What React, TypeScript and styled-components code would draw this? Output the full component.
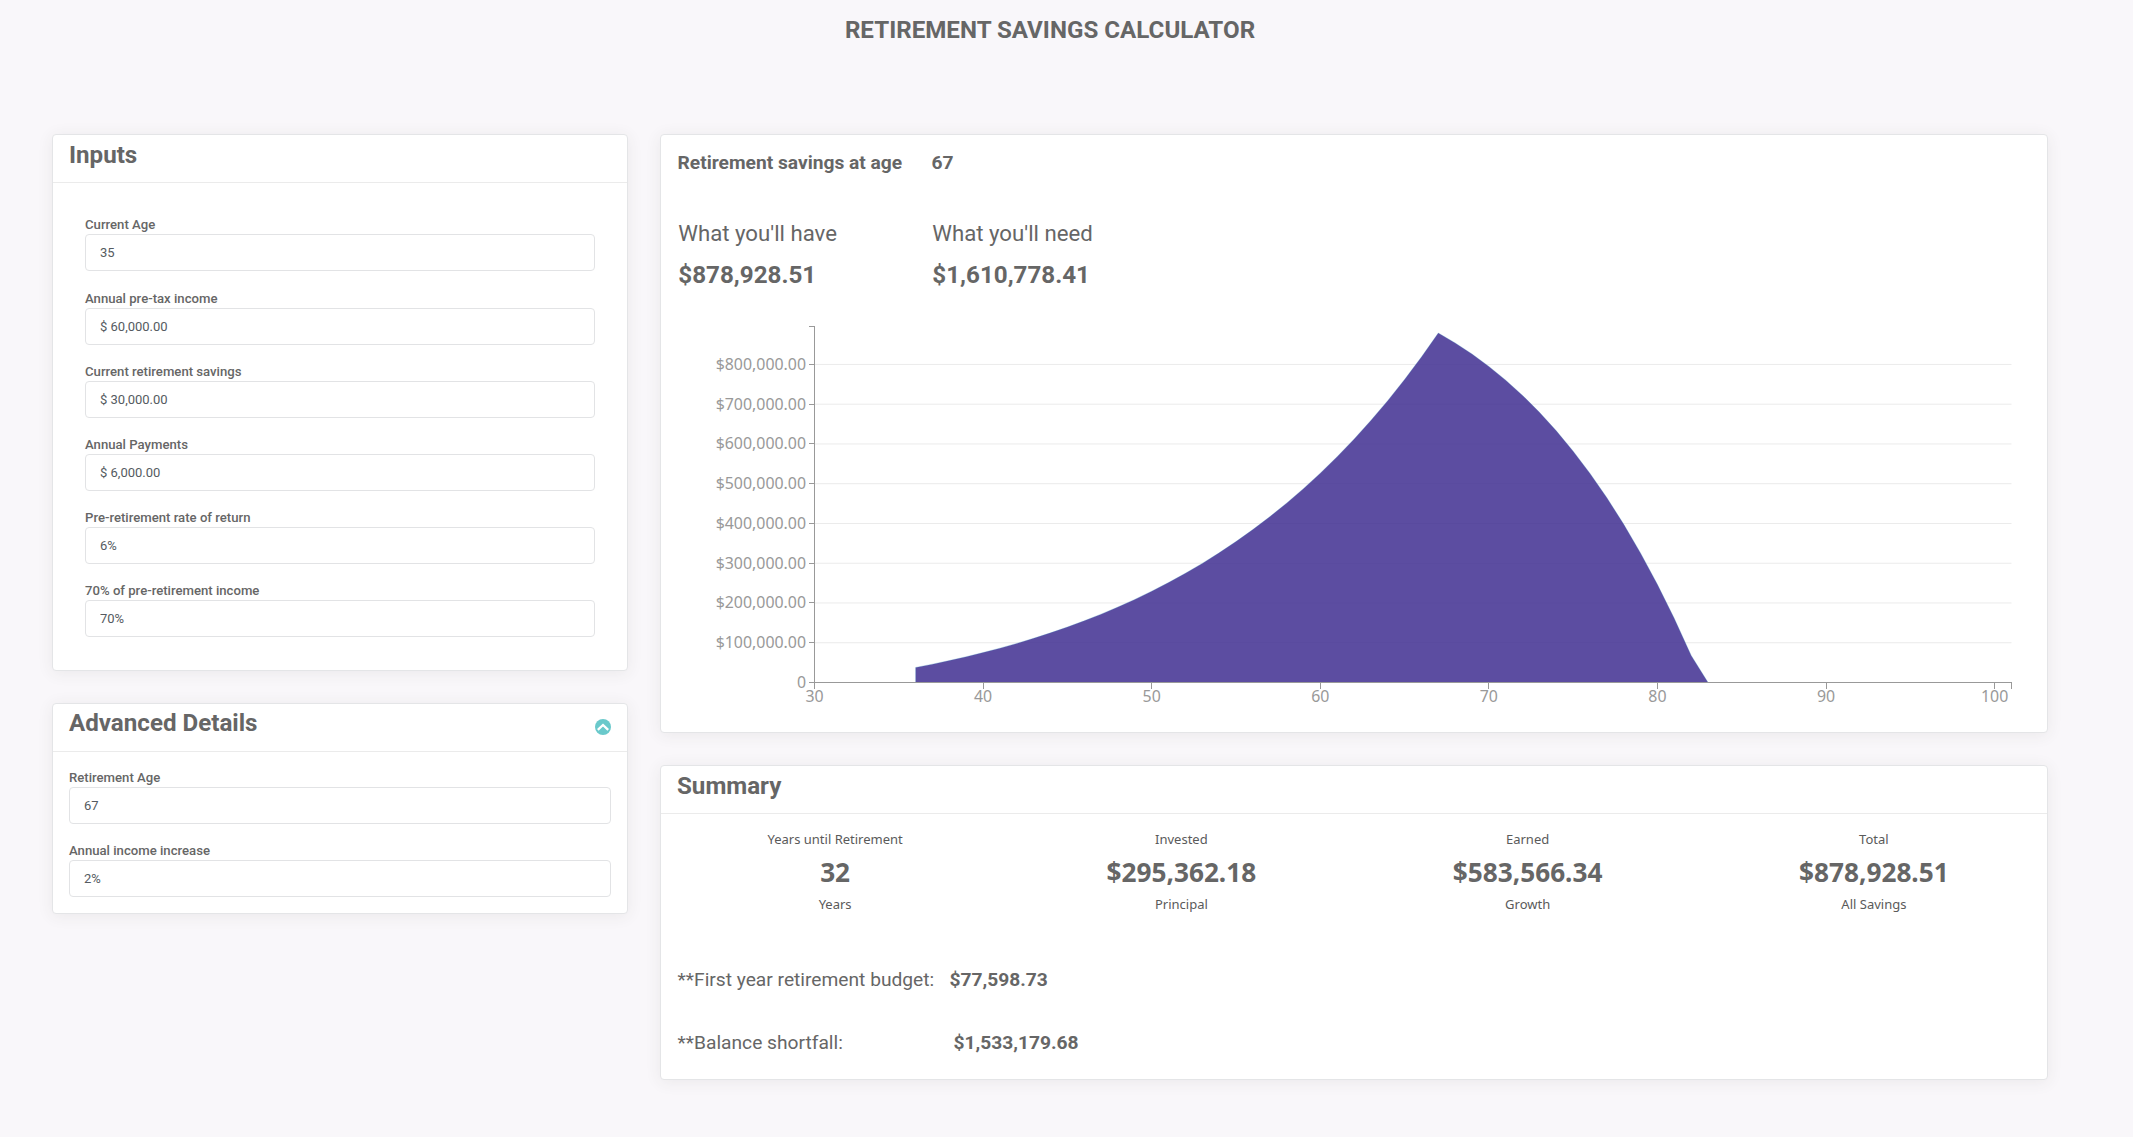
import { FC } from 'react';
import styled, { createGlobalStyle } from 'styled-components';

const GlobalStyle = createGlobalStyle`
  * {
    box-sizing: border-box;
  }
  body {
    margin: 0;
    background-color: #f9f7fa;
    color: #666666;
    font-family: Roboto, sans-serif;
  }
`;

const Page = styled.main`
  width: 2100px;
  height: 1137px;
  padding: 0 52px;
`;
const PageTitle = styled.h1`
  margin: 0;
  height: 134px;
  padding-top: 16px;
  font-size: 24.15px;
  line-height: 28px;
  font-weight: 700;
  text-align: center;
`;
const Columns = styled.div`
  display: grid;
  grid-template-columns: 576px 1388px;
  column-gap: 32px;
  align-items: start;
`;
const Column = styled.div`
  display: flex;
  flex-direction: column;
  gap: 32px;
`;
const Card = styled.section<{ $height: number }>`
  height: ${({ $height }) => $height}px;
  background-color: #ffffff;
  border: 1px solid #e4e5e7;
  border-radius: 4px;
  box-shadow: 0 2px 16px rgba(60, 60, 50, 0.08);
`;
const CardHeader = styled.header`
  display: flex;
  justify-content: space-between;
  height: 48px;
  padding: 0 16px;
  border-bottom: 1px solid #ebebeb;
`;
const CardTitle = styled.h2<{ $top?: number }>`
  margin: 0;
  padding-top: ${({ $top = 5 }) => $top}px;
  font-size: 24.15px;
  line-height: 30px;
  font-weight: 700;
`;
const IconButton = styled.button`
  display: flex;
  width: 16px;
  height: 16px;
  margin-top: 15.4px;
  padding: 0;
  border: 0;
  background: none;
`;
const Fields = styled.div<{ $inset?: boolean }>`
  display: flex;
  flex-direction: column;
  gap: 18.2px;
  padding: ${({ $inset }) => ($inset ? '33.4px 32px' : '17.4px 16px')};
`;
const Field = styled.label`
  display: flex;
  flex-direction: column;
  justify-content: space-between;
  height: 55px;
  font-size: 13.15px;
  line-height: 17.6px;
  font-weight: 500;
`;
const Input = styled.input`
  width: 100%;
  height: 37px;
  padding: 0 14px;
  border: 1px solid #e2e3e5;
  border-radius: 4px;
  color: #555b61;
  font-family: Roboto, sans-serif;
  font-size: 13px;
`;
const Heading = styled.div`
  display: grid;
  grid-template-columns: 254px 1fr;
  padding: 15px 16.5px 0;
  font-size: 19.2px;
  line-height: 26px;
  font-weight: 700;
`;
const Totals = styled.div`
  display: grid;
  grid-template-columns: 254px 1fr;
  height: 143px;
  padding: 42px 17.3px 0;
`;
const TotalLabel = styled.div`
  font-size: 22.2px;
  line-height: 30px;
`;
const TotalValue = styled.div`
  margin-top: 12px;
  font-size: 24.2px;
  line-height: 30px;
  font-weight: 700;
`;
const ChartSvg = styled.svg`
  display: block;
  & text {
    fill: #999999;
    font-family: 'Noto Sans', sans-serif;
    font-size: 15.9px;
  }
`;
const Stats = styled.div`
  display: grid;
  grid-template-columns: repeat(4, 1fr);
  height: 138px;
  padding: 15px 0 0 1px;
  text-align: center;
  font-family: 'Noto Sans', sans-serif;
`;
const StatText = styled.div`
  font-size: 13px;
  line-height: 20px;
  color: #5a5a5a;
`;
const StatValue = styled.div`
  margin: 7px 0 6px;
  font-size: 26.2px;
  line-height: 32px;
  font-weight: 700;
`;
const Note = styled.div<{ $labelWidth: number }>`
  display: grid;
  grid-template-columns: ${({ $labelWidth }) => $labelWidth}px 1fr;
  height: 63px;
  padding: 15px 16.5px 0;
  font-size: 19.2px;
  line-height: 26px;
  & strong {
    font-weight: 700;
  }
`;

const inputFields = [
  { label: 'Current Age', value: '35' },
  { label: 'Annual pre-tax income', value: '$ 60,000.00' },
  { label: 'Current retirement savings', value: '$ 30,000.00' },
  { label: 'Annual Payments', value: '$ 6,000.00' },
  { label: 'Pre-retirement rate of return', value: '6%' },
  { label: '70% of pre-retirement income', value: '70%' },
];
const advancedFields = [
  { label: 'Retirement Age', value: '67' },
  { label: 'Annual income increase', value: '2%' },
];
const stats = [
  { label: 'Years until Retirement', value: '32', unit: 'Years' },
  { label: 'Invested', value: '$295,362.18', unit: 'Principal' },
  { label: 'Earned', value: '$583,566.34', unit: 'Growth' },
  { label: 'Total', value: '$878,928.51', unit: 'All Savings' },
];

type Point = { age: number; balance: number };

const getProjection = (): Point[] => {
  const points: Point[] = [];
  let balance = 30000;
  let payment = 6000;
  let budget = 42000 * 1.02 ** 31;
  for (let age = 36; age <= 83; age++) {
    if (age <= 67) {
      balance = balance * 1.06 + payment;
      payment *= 1.02;
    } else {
      balance = Math.max(0, balance * 1.06 - budget);
      budget *= 1.02;
    }
    points.push({ age, balance });
  }
  return points;
};

const LEFT = 153.5;
const RIGHT = 1350.5;
const TOP = 7.5;
const BOTTOM = 363.5;

const getX = (age: number) => LEFT + ((age - 30) * (RIGHT - LEFT)) / 71;
const getY = (balance: number) => BOTTOM - (balance * 39.76) / 100000;

const SavingsChart: FC = () => {
  const line = getProjection()
    .map(({ age, balance }) => `${getX(age)},${getY(balance)}`)
    .join(' L');
  const amounts = [0, 1, 2, 3, 4, 5, 6, 7, 8];
  const ages = [30, 40, 50, 60, 70, 80, 90, 100];

  return (
    <ChartSvg width="1386" height="413">
      {amounts.slice(1).map((n) => (
        <line
          key={n}
          x1={LEFT}
          x2={RIGHT}
          y1={getY(n * 100000)}
          y2={getY(n * 100000)}
          stroke="#ebebeb"
        />
      ))}
      <path
        d={`M${line} L${getX(36)},${BOTTOM} Z`}
        fill="#413092"
        fillOpacity={0.86}
        stroke="#3182bd"
        strokeOpacity={0.5}
        strokeWidth={0.5}
      />
      <g stroke="#999999" fill="none" shapeRendering="crispEdges">
        <path d={`M${LEFT - 6},${TOP} H${LEFT} V${BOTTOM} H${RIGHT} V${BOTTOM + 6}`} />
        {amounts.map((n) => (
          <line key={n} x1={LEFT - 6} x2={LEFT} y1={getY(n * 100000)} y2={getY(n * 100000)} />
        ))}
        {ages.map((age) => (
          <line key={age} x1={getX(age)} x2={getX(age)} y1={BOTTOM} y2={BOTTOM + 6} />
        ))}
      </g>
      {amounts.map((n) => (
        <text key={n} x={LEFT - 8.5} y={getY(n * 100000) + 5.5} textAnchor="end">
          {n === 0 ? '0' : `$${n}00,000.00`}
        </text>
      ))}
      {ages.map((age) => (
        <text key={age} x={getX(age)} y={BOTTOM + 19.5} textAnchor="middle">
          {age}
        </text>
      ))}
    </ChartSvg>
  );
};

const App: FC = () => {
  return (
    <>
      <GlobalStyle />
      <Page>
        <PageTitle>RETIREMENT SAVINGS CALCULATOR</PageTitle>
        <Columns>
          <Column>
            <Card $height={536.6}>
              <CardHeader>
                <CardTitle>Inputs</CardTitle>
              </CardHeader>
              <Fields $inset>
                {inputFields.map(({ label, value }) => (
                  <Field key={label}>
                    {label}
                    <Input defaultValue={value} />
                  </Field>
                ))}
              </Fields>
            </Card>
            <Card $height={211}>
              <CardHeader>
                <CardTitle $top={4}>Advanced Details</CardTitle>
                <IconButton>
                  <svg width="16" height="16" viewBox="0 0 16 16">
                    <circle cx="8" cy="8" r="8" fill="#6ac9cb" />
                    <path d="M2.8 10.9 8 6l5.2 4.9" fill="none" stroke="#fff" strokeWidth="2.3" />
                  </svg>
                </IconButton>
              </CardHeader>
              <Fields>
                {advancedFields.map(({ label, value }) => (
                  <Field key={label}>
                    {label}
                    <Input defaultValue={value} />
                  </Field>
                ))}
              </Fields>
            </Card>
          </Column>
          <Column>
            <Card $height={599}>
              <Heading>
                <span>Retirement savings at age</span>
                <span>67</span>
              </Heading>
              <Totals>
                <div>
                  <TotalLabel>What you'll have</TotalLabel>
                  <TotalValue>$878,928.51</TotalValue>
                </div>
                <div>
                  <TotalLabel>What you'll need</TotalLabel>
                  <TotalValue>$1,610,778.41</TotalValue>
                </div>
              </Totals>
              <SavingsChart />
            </Card>
            <Card $height={315}>
              <CardHeader>
                <CardTitle>Summary</CardTitle>
              </CardHeader>
              <Stats>
                {stats.map(({ label, value, unit }) => (
                  <div key={label}>
                    <StatText>{label}</StatText>
                    <StatValue>{value}</StatValue>
                    <StatText>{unit}</StatText>
                  </div>
                ))}
              </Stats>
              <Note $labelWidth={272}>
                <span>**First year retirement budget:</span>
                <strong>$77,598.73</strong>
              </Note>
              <Note $labelWidth={276}>
                <span>**Balance shortfall:</span>
                <strong>$1,533,179.68</strong>
              </Note>
            </Card>
          </Column>
        </Columns>
      </Page>
    </>
  );
};

export default App;
